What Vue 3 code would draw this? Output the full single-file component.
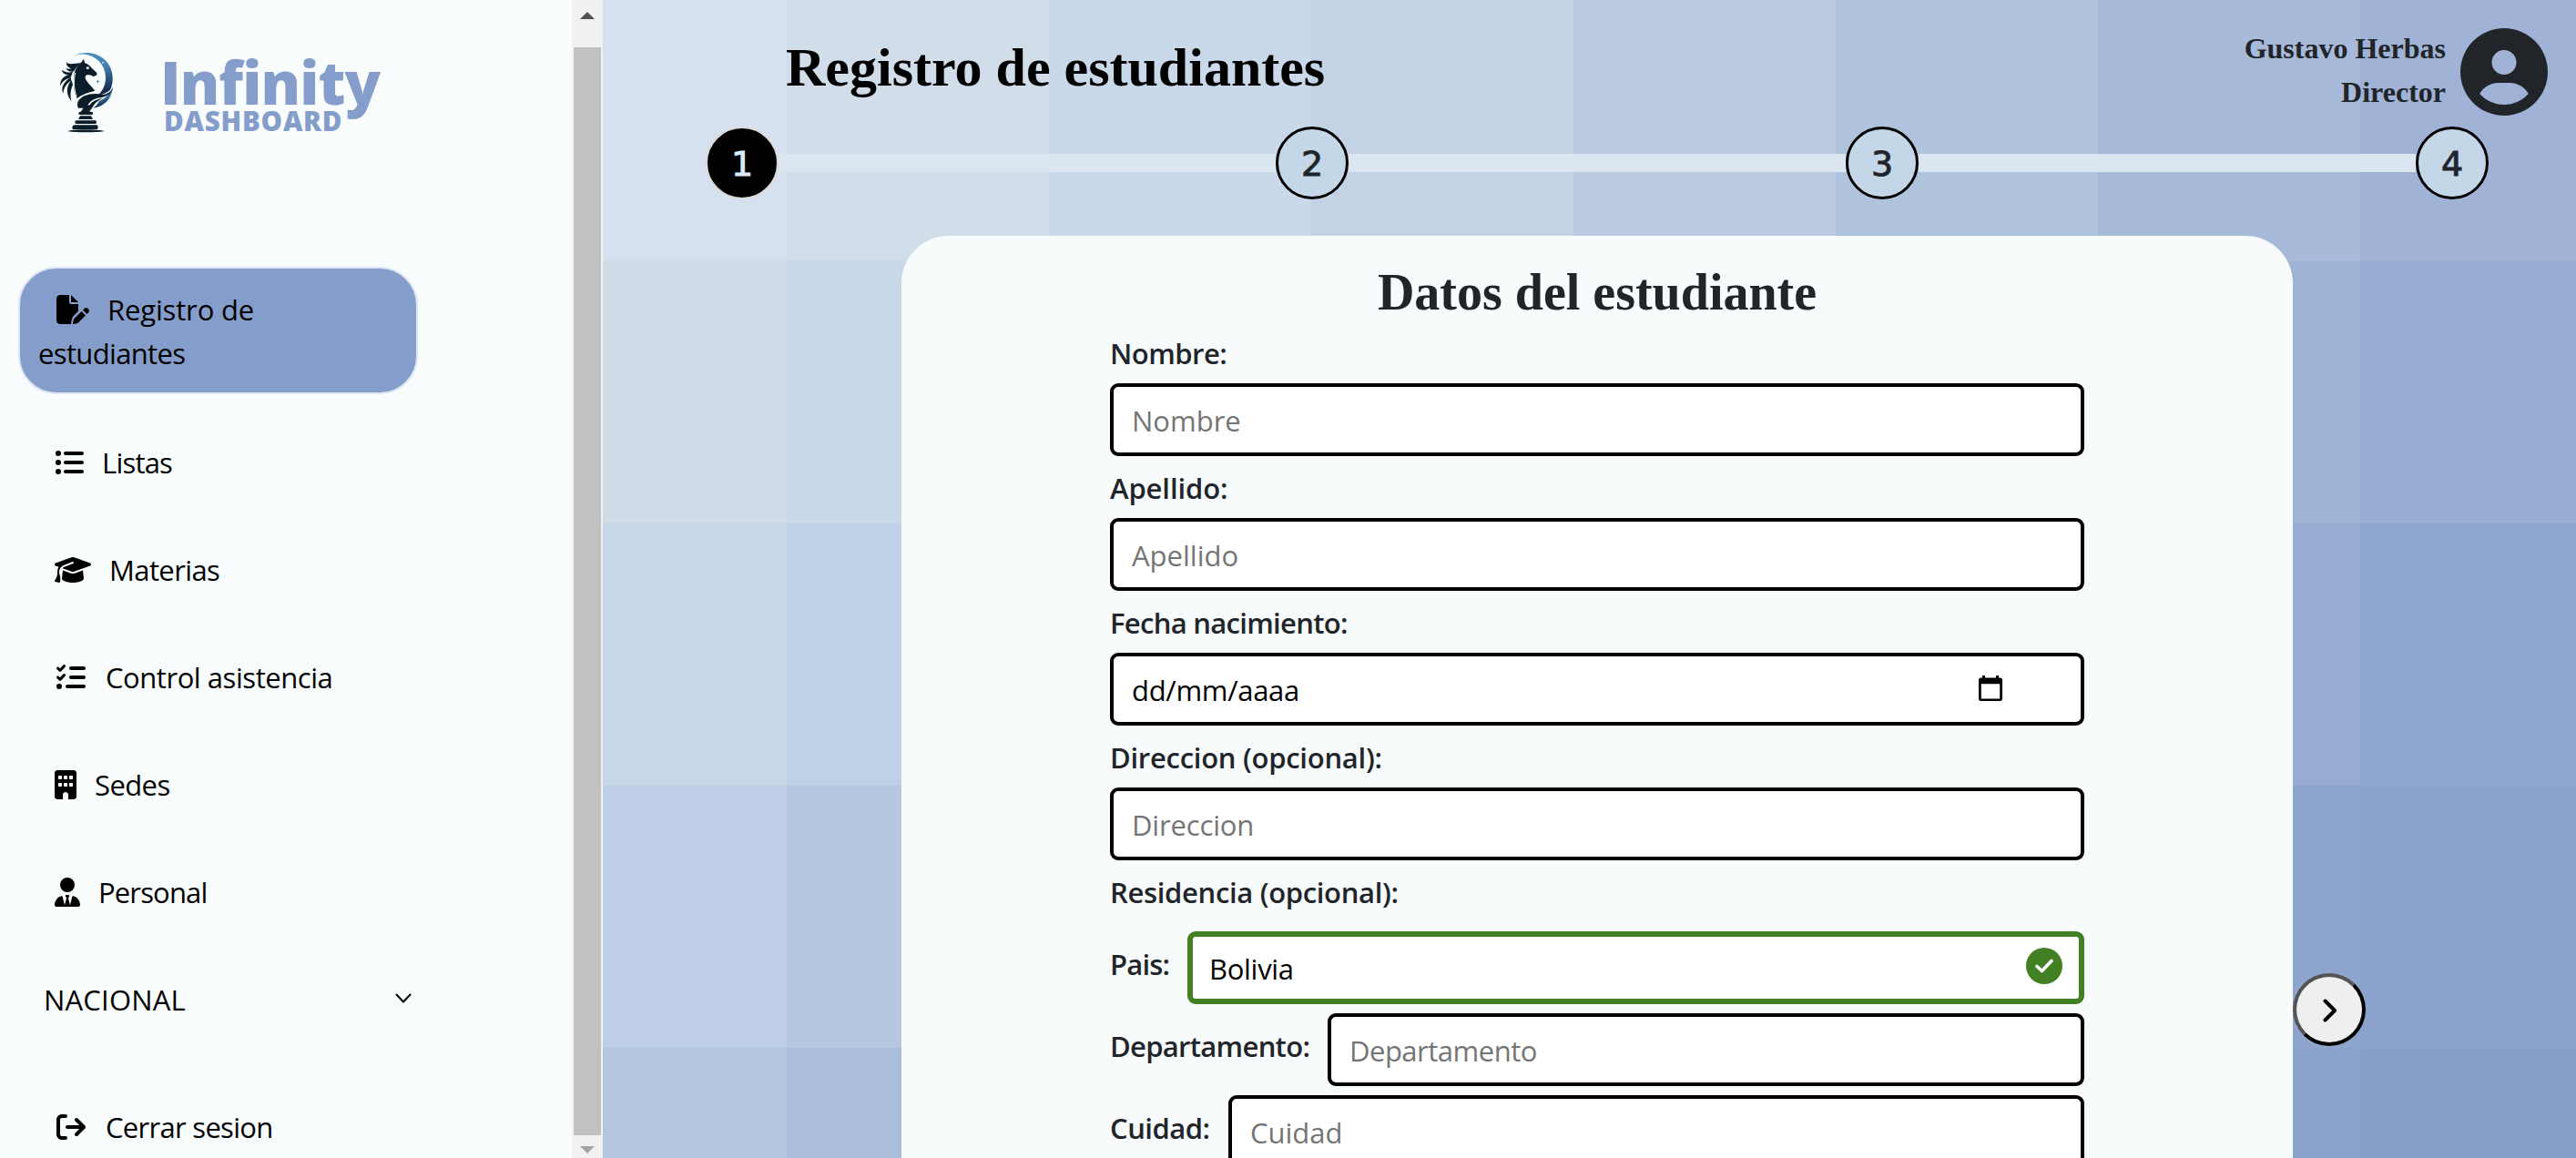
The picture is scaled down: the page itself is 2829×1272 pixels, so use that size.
<script setup>
const icons = {
  filePen: {
    w: 576,
    d: 'M0 64C0 28.7 28.7 0 64 0H224V128c0 17.7 14.3 32 32 32H384V285.7l-86.8 86.8c-10.3 10.3-17.5 23.1-21 37.2l-18.7 74.9c-2.3 9.2-1.8 18.8 1.3 27.5H64c-35.3 0-64-28.7-64-64V64zm384 64H256V0L384 128zM549.8 235.7l14.4 14.4c15.6 15.6 15.6 40.9 0 56.6l-29.4 29.4-71-71 29.4-29.4c15.6-15.6 40.9-15.6 56.6 0zM311.9 417L441.1 287.8l71 71L382.9 487.9c-4.1 4.1-9.2 7-14.9 8.4l-60.1 15c-5.5 1.4-11.2-.2-15.2-4.2s-5.6-9.7-4.2-15.2l15-60.1c1.4-5.6 4.3-10.8 8.4-14.9z'
  },
  list: {
    w: 512,
    d: 'M64 144a48 48 0 1 0 0-96 48 48 0 1 0 0 96zM192 64c-17.7 0-32 14.3-32 32s14.3 32 32 32H480c17.7 0 32-14.3 32-32s-14.3-32-32-32H192zm0 160c-17.7 0-32 14.3-32 32s14.3 32 32 32H480c17.7 0 32-14.3 32-32s-14.3-32-32-32H192zm0 160c-17.7 0-32 14.3-32 32s14.3 32 32 32H480c17.7 0 32-14.3 32-32s-14.3-32-32-32H192zM64 464a48 48 0 1 0 0-96 48 48 0 1 0 0 96zm48-208a48 48 0 1 0-96 0 48 48 0 1 0 96 0z'
  },
  cap: {
    w: 640,
    d: 'M320 32c-8.1 0-16.1 1.4-23.7 4.1L15.8 137.4C6.3 140.9 0 149.9 0 160s6.3 19.1 15.8 22.6l57.9 20.9C57.3 229.3 48 259.8 48 291.9v28.1c0 28.4-10.8 57.7-22.3 80.8c-6.5 13-13.9 25.8-22.5 37.6C0 442.7-.9 448.3 .9 453.4s6 8.9 11.2 10.2l64 16c4.2 1.1 8.7 .3 12.4-2s6.3-6.1 7.1-10.4c8.6-42.8 4.3-81.2-2.1-108.7C90.3 344.3 86 329.8 80 316.5V291.9c0-30.2 10.2-58.7 27.9-81.5c12.9-15.5 29.6-28 49.2-35.7l157-61.7c8.2-3.2 17.5 .8 20.7 9s-.8 17.5-9 20.7l-157 61.7c-12.4 4.9-23.3 12.4-32.2 21.6l159.6 57.6c7.6 2.7 15.6 4.1 23.7 4.1s16.1-1.4 23.7-4.1L624.2 182.6c9.5-3.4 15.8-12.5 15.8-22.6s-6.3-19.1-15.8-22.6L343.7 36.1C336.1 33.4 328.1 32 320 32zM128 408c0 35.3 86 72 192 72s192-36.7 192-72L496.7 262.6 354.5 314c-11.1 4-22.8 6-34.5 6s-23.5-2-34.5-6L143.3 262.6 128 408z'
  },
  listCheck: {
    w: 512,
    d: 'M152.1 38.2c9.9 8.9 10.7 24 1.8 33.9l-72 80c-4.4 4.9-10.6 7.8-17.2 7.9s-12.9-2.4-17.6-7L7 113C-2.3 103.6-2.3 88.4 7 79s24.6-9.4 33.9 0l22.1 22.1 55.1-61.2c8.9-9.9 24-10.7 33.9-1.8zm0 160c9.9 8.9 10.7 24 1.8 33.9l-72 80c-4.4 4.9-10.6 7.8-17.2 7.9s-12.9-2.4-17.6-7L7 273c-9.4-9.4-9.4-24.6 0-33.9s24.6-9.4 33.9 0l22.1 22.1 55.1-61.2c8.9-9.9 24-10.7 33.9-1.8zM224 96c0-17.7 14.3-32 32-32H480c17.7 0 32 14.3 32 32s-14.3 32-32 32H256c-17.7 0-32-14.3-32-32zm0 160c0-17.7 14.3-32 32-32H480c17.7 0 32 14.3 32 32s-14.3 32-32 32H256c-17.7 0-32-14.3-32-32zM160 416c0-17.7 14.3-32 32-32H480c17.7 0 32 14.3 32 32s-14.3 32-32 32H192c-17.7 0-32-14.3-32-32zM48 368a48 48 0 1 1 0 96 48 48 0 1 1 0-96z'
  },
  building: {
    w: 384,
    d: 'M48 0C21.5 0 0 21.5 0 48V464c0 26.5 21.5 48 48 48h96V432c0-26.5 21.5-48 48-48s48 21.5 48 48v80h96c26.5 0 48-21.5 48-48V48c0-26.5-21.5-48-48-48H48zM64 240c0-8.8 7.2-16 16-16h32c8.8 0 16 7.2 16 16v32c0 8.8-7.2 16-16 16H80c-8.8 0-16-7.2-16-16V240zm112-16h32c8.8 0 16 7.2 16 16v32c0 8.8-7.2 16-16 16H176c-8.8 0-16-7.2-16-16V240c0-8.8 7.2-16 16-16zm80 16c0-8.8 7.2-16 16-16h32c8.8 0 16 7.2 16 16v32c0 8.8-7.2 16-16 16H272c-8.8 0-16-7.2-16-16V240zM80 96h32c8.8 0 16 7.2 16 16v32c0 8.8-7.2 16-16 16H80c-8.8 0-16-7.2-16-16V112c0-8.8 7.2-16 16-16zm80 16c0-8.8 7.2-16 16-16h32c8.8 0 16 7.2 16 16v32c0 8.8-7.2 16-16 16H176c-8.8 0-16-7.2-16-16V112zM272 96h32c8.8 0 16 7.2 16 16v32c0 8.8-7.2 16-16 16H272c-8.8 0-16-7.2-16-16V112c0-8.8 7.2-16 16-16z'
  },
  userTie: {
    w: 448,
    d: 'M96 128a128 128 0 1 0 256 0A128 128 0 1 0 96 128zm94.5 200.2l18.6 31L175.8 483.1l-36-146.9c-2-8.1-9.8-13.4-17.9-11.3C51.9 342.4 0 405.8 0 481.3c0 17 13.8 30.7 30.7 30.7H162.5h5.5H280h5.5H417.3c17 0 30.7-13.8 30.7-30.7c0-75.5-51.9-138.9-121.9-156.4c-8.1-2-15.9 3.3-17.9 11.3l-36 146.9L238.9 359.2l18.6-31c6.4-10.7-1.3-24.2-13.7-24.2H224 204.3c-12.4 0-20.1 13.6-13.7 24.2z'
  },
  logout: {
    w: 512,
    d: 'M502.6 278.6c12.5-12.5 12.5-32.8 0-45.3l-128-128c-12.5-12.5-32.8-12.5-45.3 0s-12.5 32.8 0 45.3L402.7 224 192 224c-17.7 0-32 14.3-32 32s14.3 32 32 32l210.7 0-73.4 73.4c-12.5 12.5-12.5 32.8 0 45.3s32.8 12.5 45.3 0l128-128zM160 96c17.7 0 32-14.3 32-32s-14.3-32-32-32L96 32C43 32 0 75 0 128L0 384c0 53 43 96 96 96l64 0c17.7 0 32-14.3 32-32s-14.3-32-32-32l-64 0c-17.7 0-32-14.3-32-32l0-256c0-17.7 14.3-32 32-32l64 0z'
  }
}

const links = [
  { icon: icons.list, text: 'Listas', cls: 'listas' },
  { icon: icons.cap, text: 'Materias', cls: 'materias' },
  { icon: icons.listCheck, text: 'Control asistencia', cls: 'control' },
  { icon: icons.building, text: 'Sedes', cls: 'sedes' },
  { icon: icons.userTie, text: 'Personal', cls: 'personal' }
]

const tiles = [
  ['#d6e1ef', '#d1deea', '#cad9e9', '#c3d3e5', '#bacbe2', '#b0c3dd', '#a7bad9', '#a0b3d6'],
  ['#d0dde9', '#c9d8e9', '#c2d2e6', '#b8cae1', '#afc2dc', '#a7b9d9', '#9fb3d5', '#97add4'],
  ['#c8d7e7', '#bfd1e7', '#b7c9e1', '#aec1dc', '#a5b8d8', '#9eb2d5', '#96acd3', '#8fa6ce'],
  ['#becee6', '#b5c7e1', '#adc0dc', '#a4b7d7', '#9db1d4', '#95abd2', '#8ea6cd', '#8aa2cc'],
  ['#b4c5df', '#aabedb', '#a3b6d6', '#9cb0d3', '#94aad1', '#8da5cd', '#8aa1cb', '#869fc9']
]

const fields = [
  { label: 'Nombre:', ph: 'Nombre', cls: 'nombre' },
  { label: 'Apellido:', ph: 'Apellido', cls: 'apellido' },
  { label: 'Fecha nacimiento:', date: 'dd/mm/aaaa', cls: 'fecha' },
  { label: 'Direccion (opcional):', ph: 'Direccion', cls: 'direccion' }
]
</script>

<template>
  <div class="app">
    <aside class="sidebar">
      <div class="brand">
        <svg class="knight" viewBox="0 0 300 300" aria-hidden="true">
          <defs>
            <linearGradient id="moon" x1="0" y1="0" x2="0.2" y2="1">
              <stop offset="0" stop-color="#4f92c2" />
              <stop offset="0.45" stop-color="#4480b3" />
              <stop offset="1" stop-color="#142c4c" />
            </linearGradient>
          </defs>
          <path fill="url(#moon)" d="M62 35C82 23 112 20 138 30C176 45 193 78 191 115C190 127 187 138 183 146C172 156 158 162 140 166C158 152 168 130 168 105C168 68 142 36 102 29C88 27 74 30 62 35Z" />
          <path fill="url(#moon)" d="M192 136C190 170 168 202 126 206C138 200 142 192 146 184C166 176 184 160 192 136Z" />
          <g fill="#0b1d29">
            <path d="M96 44L99 57C108 61 116 66 122 74L139 90C140 96 138 100 133 100L127 103C122 97 115 97 107 97C100 99 99 107 104 114C112 126 122 136 133 149C112 154 88 162 74 174C66 160 62 140 63 120C61 92 70 68 87 56Z" />
            <path d="M64 84C56 88 42 86 37 74C44 78 50 78 56 76C46 74 38 66 38 55C46 64 60 60 88 58C78 64 70 72 64 84Z" />
            <path d="M62 82C50 94 36 88 24 80C26 96 44 98 56 96Z" />
            <path d="M58 94C36 98 18 106 18 134C24 120 34 112 52 106Z" />
            <path d="M54 104C34 116 18 136 28 158C30 140 38 126 54 116Z" />
            <path d="M56 114C40 130 34 160 56 184C50 166 52 146 60 130Z" />
            <path d="M78 182C92 162 124 154 160 162C180 158 188 148 192 138C190 156 176 168 150 172C124 176 112 186 106 206L78 206C74 198 74 190 78 182Z" />
            <path d="M116 196C124 182 142 176 160 174C140 182 132 190 122 208C118 214 112 216 118 218L124 222L80 222C92 214 92 210 96 200Z" />
            <rect x="79" y="219" width="47" height="9" rx="4" />
            <path d="M84 232H120L126 243H78Z" />
            <rect x="67" y="247" width="71" height="11" rx="5" />
            <path d="M64 262H140C144 268 144 272 140 277H60C56 272 58 266 64 262Z" />
            <path d="M42 282C60 276 146 276 164 282C150 287 56 287 42 282Z" />
          </g>
          <path d="M68 90C60 122 66 150 72 168" fill="none" stroke="#f8fcfd" stroke-width="3" />
          <ellipse cx="109" cy="74" rx="5" ry="4" fill="#e8eff4" />
          <path fill="#4480b3" d="M142 112l2 5 5 1-5 2-2 5-2-5-5-2 5-1z" />
          <circle cx="159" cy="56" r="2.5" fill="#e3eef6" />
          <circle cx="112" cy="52" r="1.5" fill="#8db4d4" />
        </svg>
        <div class="wordmark">
          <span class="name">Infinity</span>
          <span class="sub">DASHBOARD</span>
        </div>
      </div>

      <nav class="nav">
        <a class="link active">
          <svg class="ico" :width="36" height="32" :viewBox="`0 0 ${icons.filePen.w} 512`"><path :d="icons.filePen.d" /></svg><span class="first">Registro de</span>
          <br /><span class="second">estudiantes</span>
        </a>
        <a v-for="l in links" :key="l.text" class="link" :class="l.cls">
          <svg class="ico" :width="l.icon.w / 16" height="32" :viewBox="`0 0 ${l.icon.w} 512`"><path :d="l.icon.d" /></svg>
          <span>{{ l.text }}</span>
        </a>
        <a class="link group">
          <span>NACIONAL</span>
          <svg width="20" height="14" viewBox="0 0 20 14"><path d="M2 2L10 10.5L18 2" fill="none" stroke="#000" stroke-width="2" /></svg>
        </a>
        <a class="link logout">
          <svg class="ico" width="32" height="32" viewBox="0 0 512 512"><path :d="icons.logout.d" /></svg>
          <span>Cerrar sesion</span>
        </a>
      </nav>
    </aside>

    <div class="scrollbar">
      <i class="arrow up"></i>
      <i class="thumb"></i>
      <i class="arrow down"></i>
    </div>

    <main class="main">
      <div class="backdrop">
        <template v-for="(row, r) in tiles" :key="r">
          <i v-for="(c, k) in row" :key="k" :style="{ background: c }"></i>
        </template>
      </div>

      <header class="head">
        <h1>Registro de estudiantes</h1>
        <div class="user">
          <p>Gustavo Herbas<br />Director</p>
          <svg width="96" height="96" viewBox="0 0 512 512"><path fill="#212529" d="M399 384.2C376.9 345.8 335.4 320 288 320H224c-47.4 0-88.9 25.8-111 64.2c35.2 39.2 86.2 63.8 143 63.8s107.8-24.7 143-63.8zM0 256a256 256 0 1 1 512 0A256 256 0 1 1 0 256zm256 16a72 72 0 1 0 0-144 72 72 0 1 0 0 144z" /></svg>
        </div>
      </header>

      <div class="steps">
        <b class="step on">1</b><i></i><b class="step">2</b><i></i><b class="step">3</b><i></i><b class="step">4</b>
      </div>

      <div class="body">
        <section class="card">
          <h2>Datos del estudiante</h2>
          <div v-for="f in fields" :key="f.label" class="field" :class="f.cls">
            <label>{{ f.label }}</label>
            <div class="box" :class="{ filled: f.date }">
              <span>{{ f.date || f.ph }}</span>
              <svg v-if="f.date" class="cal" width="26" height="28" viewBox="0 0 26 28">
                <path fill="#000" fill-rule="evenodd" d="M4 0H7V2.5H19V0H22V2.5H23.5Q26 2.5 26 5V25.500Q26 28 23.500 28H2.500Q0 28 0 25.500V5Q0 2.500 2.500 2.500H4ZM2.800 9.200V25.400H23.200V9.200Z" />
              </svg>
            </div>
          </div>
          <p class="residencia">Residencia (opcional):</p>
          <div class="row pais">
            <label>Pais:</label>
            <div class="box filled valid">
              <span>Bolivia</span>
              <svg width="40" height="40" viewBox="0 0 40 40">
                <circle cx="20" cy="20" r="20" fill="#428024" />
                <path d="M12 20.500L17.500 25.500L28 14.500" fill="none" stroke="#fff" stroke-width="3.600" stroke-linecap="round" stroke-linejoin="round" />
              </svg>
            </div>
          </div>
          <div class="row departamento">
            <label>Departamento:</label>
            <div class="box"><span>Departamento</span></div>
          </div>
          <div class="row cuidad">
            <label>Cuidad:</label>
            <div class="box"><span>Cuidad</span></div>
          </div>
        </section>
        <button class="next" aria-label="Siguiente">
          <svg width="16" height="26" viewBox="0 0 16 26"><path d="M2.500 2.500L13 13L2.500 23.500" fill="none" stroke="#000" stroke-width="4" stroke-linecap="round" stroke-linejoin="round" /></svg>
        </button>
      </div>
    </main>
  </div>
</template>

<style>
body {
  overflow: hidden;
}
</style>

<style scoped>
.app {
  display: flex;
  width: 2829px;
  height: 1272px;
  overflow: hidden;
  font: 31px/48px "Open Sans", "Noto Sans", sans-serif;
  color: #000;
}

.sidebar {
  width: 628px;
  flex: none;
  background: #f8fcfd;
}
.brand {
  display: flex;
  height: 293px;
  box-sizing: border-box;
  padding: 50px 0 0 60px;
}
.knight {
  width: 100px;
  height: 100px;
}
.wordmark {
  display: flex;
  flex-direction: column;
  margin-left: 16px;
  font-weight: 800;
  color: #859dca;
}
.name {
  font-size: 65px;
  line-height: 64px;
  margin-top: 8px;
  letter-spacing: -0.9px;
}
.sub {
  margin: -7px 0 0 4px;
  font-size: 29.5px;
  line-height: 36px;
  letter-spacing: 0.8px;
}

.link {
  display: flex;
  height: 48px;
  margin: 0 0 70px 60px;
  white-space: nowrap;
}
.ico {
  flex: none;
  margin: 8px 20px 0 0;
}
.link.active {
  display: block;
  box-sizing: border-box;
  width: 439px;
  height: 140px;
  margin: 0 0 51px 20px;
  padding: 21px 0 0 20px;
  border: 2px solid #dce6f1;
  border-radius: 42px;
  background: #859dca;
}
.active .ico {
  margin: 0 20px 0 20px;
  vertical-align: -4px;
}
.active .first { letter-spacing: -0.15px; }
.active .second { letter-spacing: -0.65px; }
.listas { letter-spacing: -0.8px; }
.materias { letter-spacing: -0.6px; }
.control { letter-spacing: -0.45px; }
.sedes { letter-spacing: -0.6px; }
.personal { letter-spacing: -0.85px; }
.control .ico,
.logout .ico {
  margin-left: 2px;
  margin-right: 22px;
}
.group {
  width: 405px;
  margin: 0 0 92px 48px;
  justify-content: space-between;
  letter-spacing: 0.2px;
}
.group svg { margin-top: 16px; }
.logout { letter-spacing: -0.7px; }

.scrollbar {
  display: flex;
  flex: none;
  flex-direction: column;
  align-items: center;
  width: 34px;
  background: #f1f1f1;
}
.arrow {
  flex: none;
  border: 8px solid transparent;
}
.up {
  margin-top: 5px;
  border-bottom-color: #505050;
}
.down {
  margin-top: 12px;
  border-top-color: #a3a3a3;
}
.thumb {
  flex: none;
  width: 30px;
  height: 1195px;
  margin-top: 31px;
  background: #c1c1c1;
}

.main {
  position: relative;
  flex: 1;
  min-width: 0;
}
.backdrop {
  position: absolute;
  inset: 0;
  z-index: -1;
  display: grid;
  grid-template-columns: 202px repeat(6, 288px) 1fr;
  grid-template-rows: 287px repeat(3, 288px) 1fr;
}

.head {
  display: flex;
  justify-content: space-between;
  height: 139px;
  padding: 0 31px 0 201px;
  font-family: "Liberation Serif", serif;
  font-weight: bold;
}
h1 {
  margin: 38px 0 0;
  font-size: 60px;
  line-height: 72px;
}
.user {
  display: flex;
  gap: 16px;
  font-size: 32px;
  line-height: 48px;
  text-align: right;
  color: #212529;
}
.user p { margin: 29px 0 0; }
.user svg { margin-top: 31px; }

.steps {
  display: flex;
  align-items: center;
  width: 1958px;
  margin-left: 113px;
}
.steps i {
  flex: 1;
  height: 20px;
  background: #dce6f0;
}
.step {
  box-sizing: border-box;
  width: 80px;
  height: 80px;
  border: 3px solid #000;
  border-radius: 50%;
  background: #c4d7e8;
  color: #212529;
  font: 38px/76px "DejaVu Sans", sans-serif;
  -webkit-text-stroke: 0.9px currentColor;
  text-align: center;
}
.step.on {
  border: 2px solid #dcd9d6;
  background: #000;
  color: #dcebf9;
  line-height: 78px;
}

.body {
  display: flex;
  align-items: flex-start;
  margin: 40px 0 0 328px;
}
.card {
  box-sizing: border-box;
  width: 1528px;
  height: 1100px;
  padding: 29px 229px 0;
  border-radius: 52px;
  background: #f8fbfc;
  color: #212529;
}
h2 {
  margin: 0 0 9px;
  font: bold 56px/67px "Liberation Serif", serif;
  text-align: center;
}
.field { height: 148px; }
.field label {
  display: block;
  margin-bottom: 9px;
}
label,
.residencia {
  font-weight: 600;
}
.box {
  display: flex;
  box-sizing: border-box;
  width: 100%;
  height: 80px;
  padding: 13px 0 0 20px;
  border: 4px solid #000;
  border-radius: 9px;
  background: #fff;
  color: #757575;
}
.box.filled { color: #000; }
.cal { margin: 8px 86px 0 auto; }
.nombre label { letter-spacing: -0.5px; }
.apellido label { letter-spacing: -0.1px; }
.fecha label { letter-spacing: -0.7px; }
.fecha span { letter-spacing: -0.3px; }
.direccion label { letter-spacing: -0.27px; }
.residencia {
  margin: 0 0 19px;
  letter-spacing: -0.33px;
}
.row {
  display: flex;
  height: 80px;
  margin-bottom: 10px;
}
.row label {
  flex: none;
  padding-top: 12px;
}
.pais label { width: 85px; letter-spacing: -0.8px; }
.departamento label { width: 239px; letter-spacing: -0.7px; }
.cuidad label { width: 130px; letter-spacing: -0.5px; }
.direccion span { letter-spacing: -0.15px; }
.departamento span { letter-spacing: -0.5px; }
.valid {
  padding: 12px 18px 0;
  justify-content: space-between;
  border: 6px solid #428024;
}
.valid span {
  margin-top: -1px;
  letter-spacing: -0.3px;
}

.next {
  display: flex;
  align-items: center;
  justify-content: center;
  box-sizing: border-box;
  width: 80px;
  height: 80px;
  margin-top: 810px;
  padding: 2px 0 0 1px;
  border: 4px outset #000;
  border-radius: 50%;
  background: #efefef;
}
</style>
